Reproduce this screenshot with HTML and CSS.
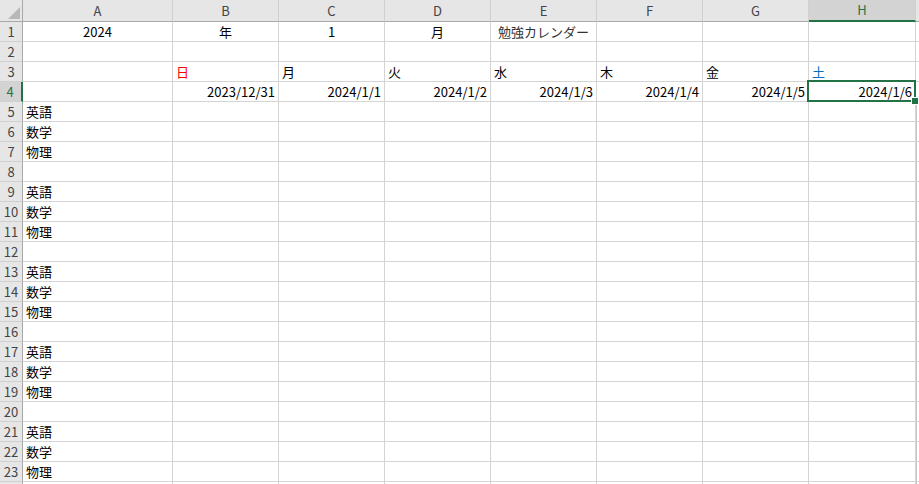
FILE: index.html
```html
<!DOCTYPE html>
<html lang="ja">

<head>
    <meta charset="utf-8">
    <title>勉強カレンダー</title>
    <link rel="stylesheet" href="styles.css">
</head>

<body>
    <div class="sheet" id="sheet"></div>

    <script>
        const sheet = document.getElementById('sheet');
        const columns = ['A', 'B', 'C', 'D', 'E', 'F', 'G', 'H', ''];
        const subjects = ['英語', '数学', '物理', ''];

        // row -> list of [column index, text, class]
        const cells = {
            1: [[0, '2024', 'center'], [1, '年', 'center'], [2, '1', 'center'], [3, '月', 'center'], [4, '勉強カレンダー', 'center title']],
            3: [[1, '日', 'sun'], [2, '月', ''], [3, '火', ''], [4, '水', ''], [5, '木', ''], [6, '金', ''], [7, '土', 'sat']],
            4: [[1, '2023/12/31', 'right'], [2, '2024/1/1', 'right'], [3, '2024/1/2', 'right'], [4, '2024/1/3', 'right'],
                [5, '2024/1/4', 'right'], [6, '2024/1/5', 'right'], [7, '2024/1/6', 'right']]
        };

        for (let r = 5; r <= 23; r++) {
            const subject = subjects[(r - 5) % 4];
            if (subject) cells[r] = [[0, subject, '']];
        }

        function addCell(className, text) {
            const div = document.createElement('div');
            div.className = className;
            if (text) div.textContent = text;
            sheet.appendChild(div);
            return div;
        }

        const corner = addCell('corner');
        corner.innerHTML = '<svg width="12" height="12" viewBox="0 0 12 12"><polygon points="12,0 12,12 0,12" fill="#b8b8b8"/></svg>';

        columns.forEach((name, i) => {
            addCell('col-head' + (i === 7 ? ' active' : ''), name);
        });

        // row 24 is only a sliver at the bottom edge, so it gets no label
        for (let r = 1; r <= 24; r++) {
            addCell('row-head' + (r === 4 ? ' active' : ''), r < 24 ? String(r) : '');
            const row = cells[r] || [];
            columns.forEach((name, c) => {
                const found = row.find(item => item[0] === c);
                let cls = 'cell';
                if (found && found[2]) cls += ' ' + found[2];
                if (r === 4 && c === 7) cls += ' selected';
                if (r >= 5 && c === 8) cls += ' edge';
                addCell(cls, found ? found[1] : '');
            });
        }
    </script>
</body>

</html>
```

FILE: styles.css
```css
* {
    margin: 0;
    padding: 0;
    box-sizing: border-box;
}

body {
    font-family: "Noto Sans CJK JP", "Noto Sans", sans-serif;
    font-size: 13px;
    background: #ffffff;
    color: #000000;
    overflow: hidden;
    width: 919px;
    height: 484px;
}

.sheet {
    display: grid;
    grid-template-columns: 23px 150px repeat(6, 106px) 107px 1fr;
    grid-template-rows: 22px repeat(24, 20px);
}

.corner {
    background: #e6e6e6;
    border-right: 1px solid #a8a8a8;
    border-bottom: 1px solid #a8a8a8;
    display: flex;
    align-items: flex-end;
    justify-content: flex-end;
    padding: 0 2px 2px 0;
}

.col-head {
    background: #e6e6e6;
    border-right: 1px solid #d0d0d0;
    border-bottom: 1px solid #a8a8a8;
    color: #444444;
    text-align: center;
    line-height: 21px;
}

.col-head.active {
    background-color: #d3d3d3;
    background-image: radial-gradient(#c8c8c8 0.5px, transparent 0.7px);
    background-size: 6px 6px;
    border-bottom: 2px solid #217346;
    color: #217346;
    line-height: 20px;
}

.row-head {
    background: #e6e6e6;
    border-right: 1px solid #a8a8a8;
    border-bottom: 1px solid #d0d0d0;
    color: #444444;
    text-align: center;
    line-height: 19px;
}

.row-head.active {
    background-color: #d3d3d3;
    background-image: radial-gradient(#c8c8c8 0.5px, transparent 0.7px);
    background-size: 6px 6px;
    border-right: 2px solid #217346;
    color: #217346;
    padding-right: 1px;
}

.cell {
    border-right: 1px solid #d4d4d4;
    border-bottom: 1px solid #d4d4d4;
    padding: 0 3px 0 3px;
    line-height: 19px;
    white-space: nowrap;
    overflow: visible;
    position: relative;
}

.cell.center {
    text-align: center;
}

.cell.right {
    text-align: right;
}

.cell.title {
    color: #333333;
}

.cell.sun {
    color: #ff0000;
}

.cell.sat {
    color: #0070c0;
}

.cell.edge {
    border-left: 1px solid #c8c8c8;
}

.cell.selected::after {
    content: "";
    position: absolute;
    top: -2px;
    left: -2px;
    right: -1px;
    bottom: -1px;
    border: 2px solid #217346;
}

.cell.selected::before {
    content: "";
    position: absolute;
    right: -4px;
    bottom: -4px;
    width: 6px;
    height: 6px;
    background: #217346;
    border: 1px solid #ffffff;
    z-index: 2;
}
```
